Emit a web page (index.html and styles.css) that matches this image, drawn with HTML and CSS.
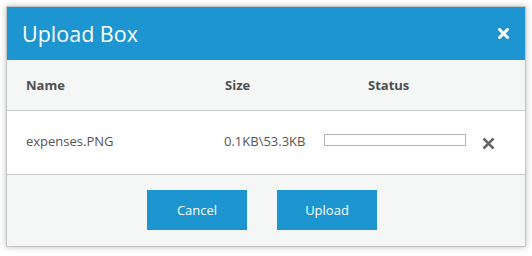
FILE: index.html
```html
<!doctype html>
<html lang="en">
    <head>
        <meta charset="UTF-8" />
        <title>Upload Box</title>
        <link rel="stylesheet" href="styles.css">
    </head>
    <body>
        <div class="dialog">
            <div class="dialog-header">
                <span class="dialog-title">Upload Box</span>
                <button class="close-btn" aria-label="Close">
                    <svg width="11" height="11" viewBox="0 0 11 11">
                        <path d="M1.5 1.5 L9.5 9.5 M9.5 1.5 L1.5 9.5" stroke="#fff" stroke-width="3" stroke-linecap="square" />
                    </svg>
                </button>
            </div>

            <div class="file-table">
                <div class="file-row head">
                    <span>Name</span>
                    <span>Size</span>
                    <span class="status-head">Status</span>
                    <span></span>
                </div>
                <div class="file-row item">
                    <span>expenses.PNG</span>
                    <span>0.1KB\53.3KB</span>
                    <span class="progress"><span class="progress-fill" style="width: 0%"></span></span>
                    <button class="remove-btn" aria-label="Remove">
                        <svg width="13" height="13" viewBox="0 0 13 13">
                            <path d="M1.5 1.5 L11.5 11.5 M11.5 1.5 L1.5 11.5" stroke="#666" stroke-width="2.6" />
                        </svg>
                    </button>
                </div>
            </div>

            <div class="dialog-footer">
                <button class="btn">Cancel</button>
                <button class="btn">Upload</button>
            </div>
        </div>
    </body>
</html>
```

FILE: styles.css
```css
body {
    margin: 0;
    padding: 6px;
    background-color: #fff;
    font-family: "Open Sans", "Noto Sans", sans-serif;
    color: #555;
}
.dialog {
    width: 518px;
    height: 239px;
    border: 1px solid #c4c4c4;
    box-shadow: 0 0 6px rgba(0, 0, 0, 0.25);
    background-color: #f5f6f6;
    display: flex;
    flex-direction: column;
}
.dialog-header {
    height: 53px;
    background-color: #1c95d0;
    display: flex;
    align-items: center;
    justify-content: space-between;
    padding: 0 16px 0 15px;
}
.dialog-title {
    color: #fff;
    font-size: 21.5px;
    margin-top: -1px;
}
.close-btn,
.remove-btn {
    border: none;
    background: none;
    padding: 0;
    display: flex;
    cursor: pointer;
}
.file-row {
    display: grid;
    grid-template-columns: 198px 100px 142px 1fr;
    align-items: center;
    padding-left: 19px;
    font-size: 13px;
}
.file-row.head {
    height: 50px;
    font-weight: bold;
    color: #4f4f4f;
    border-bottom: 1px solid #c8c8c8;
}
.file-row.head span:nth-child(2) {
    margin-left: 1px;
}
.status-head {
    margin-left: 44px;
}
.file-row.item {
    height: 64px;
    background-color: #fff;
    border-bottom: 1px solid #c8c8c8;
    align-items: start;
    padding-top: 21px;
    box-sizing: border-box;
}
.progress {
    height: 10px;
    margin-top: 2px;
    border: 1px solid #b4b4b4;
    background-color: #fff;
}
.progress-fill {
    display: block;
    height: 100%;
    background-color: #1c95d0;
}
.remove-btn {
    margin: 5px 0 0 16px;
}
.dialog-footer {
    flex: 1;
    display: flex;
    gap: 30px;
    padding: 15px 0 0 140px;
}
.btn {
    width: 100px;
    height: 40px;
    border: none;
    background-color: #1c95d0;
    color: #fff;
    font-family: inherit;
    font-size: 13px;
    cursor: pointer;
}
```
